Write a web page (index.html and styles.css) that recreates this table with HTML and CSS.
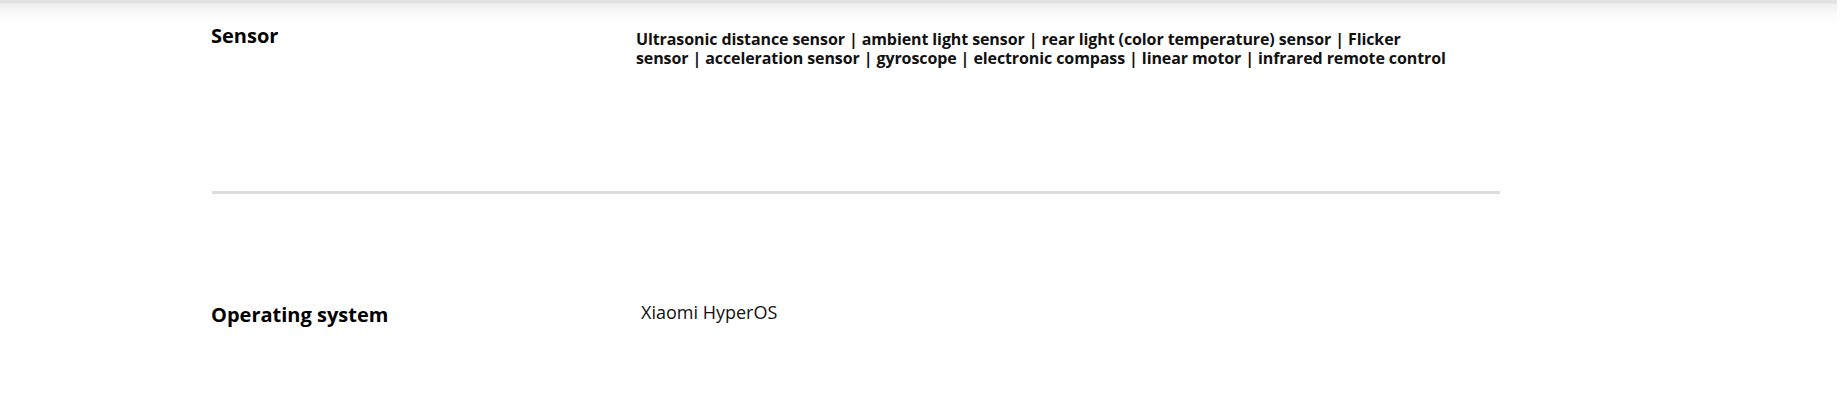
FILE: index.html
```html
<!DOCTYPE html>
<html lang="en">
<head>
  <meta charset="UTF-8">
  <title>Specs</title>
  <link rel="stylesheet" href="styles.css">
</head>
<body>
  <div class="topbar"></div>

  <div class="specs">

    <div class="row row-first">
      <div class="label">Sensor</div>
      <div class="value value-list">Ultrasonic distance sensor | ambient light sensor | rear light (color temperature) sensor | Flicker sensor | acceleration sensor | gyroscope | electronic compass | linear motor | infrared remote control</div>
    </div>

    <div class="divider"></div>

    <div class="row row-os">
      <div class="label">Operating system</div>
      <div class="value value-plain">Xiaomi HyperOS</div>
    </div>

  </div>
</body>
</html>
```

FILE: styles.css
```css
body {
  margin: 0;
  font-family: 'Open Sans', 'Liberation Sans', sans-serif;
  background: #fff;
  color: #000;
}

.topbar {
  position: absolute;
  top: 0;
  left: 0;
  width: 1837px;
  height: 22px;
  background: linear-gradient(#e2e2e2 0, #e2e2e2 3px, #efefef 4px, #fafafa 14px, rgba(255,255,255,0) 22px);
}

.specs {
  padding-left: 211px;
  padding-top: 1px;
}

.row {
  display: flex;
}

.label {
  width: 425px;
  flex-shrink: 0;
  font-size: 20px;
  line-height: 24px;
  font-weight: bold;
  color: #000;
}

.row-first {
  padding-top: 23px;
  padding-bottom: 123px;
}

.value-list {
  width: 812px;
  padding-top: 6px;
  font-size: 16px;
  line-height: 19px;
  font-weight: bold;
  letter-spacing: -0.1px;
  color: #111;
}

.divider {
  width: 1288px;
  height: 3px;
  margin-left: 1px;
  background: #dcdcdc;
}

.row-os {
  padding-top: 107px;
}

.row-os .label {
  margin-top: 2px;
}

.value-plain {
  padding-left: 5px;
  font-size: 18px;
  line-height: 22px;
  color: #111;
}
```
